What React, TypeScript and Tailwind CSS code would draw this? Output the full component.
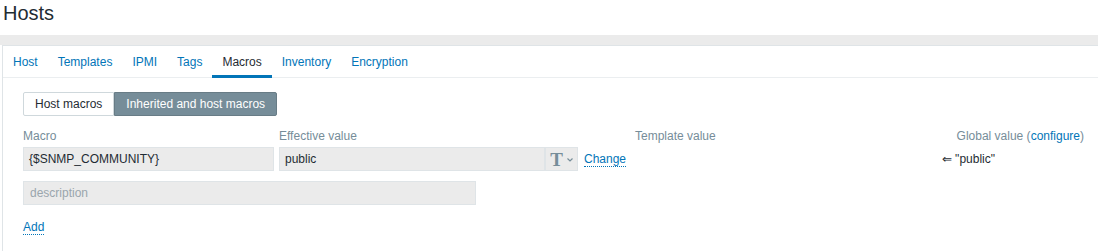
import React from "react";

const tabs = ["Host", "Templates", "IPMI", "Tags", "Macros", "Inventory", "Encryption"];

function TypeIcon() {
  return (
    <div className="flex h-[24px] w-[33px] items-center justify-center gap-[4px] border border-[#dfe4e7] bg-[#ebebeb]">
      <span className="text-[19px] leading-none font-bold text-[#768d99] [font-family:'Liberation_Serif',serif]">T</span>
      <svg width="6" height="4" viewBox="0 0 6 4" className="mt-[2px]">
        <path d="M0.5 0.5 L3 3 L5.5 0.5" fill="none" stroke="#768d99" strokeWidth="1.2" />
      </svg>
    </div>
  );
}

export default function App() {
  return (
    <div className="h-[251px] w-[1098px] overflow-hidden bg-white text-[12px] text-[#1f2c33] [font-family:'Liberation_Sans',Arial,sans-serif]">
      {/* Header */}
      <h1 className="h-[35px] pl-[3px] pt-[1px] text-[20px] leading-[24px] font-normal text-[#1f2c33]">Hosts</h1>
      <div className="h-[10px] bg-[#ebebeb]" />

      {/* Panel */}
      <div className="ml-[2px] h-[206px] border-l border-t border-[#dfe4e7] bg-white">
        {/* Tabs */}
        <div className="flex h-[32px] border-b border-[#ebeef0]">
          {tabs.map((tab) => (
            <div
              key={tab}
              className={`flex h-[32px] items-center px-[10px] ${
                tab === "Macros" ? "border-b-[3px] border-[#0275b8] pt-[3px] text-[#1f2c33]" : "text-[#0275b8]"
              }`}
            >
              {tab}
            </div>
          ))}
        </div>

        <div className="pl-[20px] pt-[14px]">
          {/* Toggle */}
          <div className="flex h-[24px]">
            <div className="flex items-center rounded-l-[2px] border border-[#cfd8dc] bg-white px-[11px] text-[#1f2c33]">Host macros</div>
            <div className="flex items-center rounded-r-[2px] border border-[#687c86] bg-[#768d99] px-[11px] text-white">
              Inherited and host macros
            </div>
          </div>

          {/* Labels */}
          <div className="mt-[11px] grid h-[16px] grid-cols-[256px_356px_1fr] items-center text-[#768d99]">
            <span>Macro</span>
            <span>Effective value</span>
            <div className="flex justify-between pr-[14px]">
              <span>Template value</span>
              <span>
                Global value (<span className="text-[#0275b8]">configure</span>)
              </span>
            </div>
          </div>

          {/* Values */}
          <div className="mt-[4px] grid h-[24px] grid-cols-[256px_356px_1fr] items-center">
            <div className="flex h-[24px] w-[251px] items-center border border-[#dfe4e7] bg-[#ebebeb] px-[5px]">{"{$SNMP_COMMUNITY}"}</div>
            <div className="flex items-center">
              <div className="flex h-[24px] w-[266px] items-center border border-[#dfe4e7] bg-[#ebebeb] px-[5px]">public</div>
              <TypeIcon />
              <span className="ml-[6px] border-b border-dotted border-[#0275b8] leading-[14px] text-[#0275b8]">Change</span>
            </div>
            <div className="flex justify-end pr-[103px]">
              <span>⇐ "public"</span>
            </div>
          </div>

          {/* Description */}
          <div className="mt-[10px] flex h-[24px] w-[453px] items-center border border-[#dfe4e7] bg-[#ebebeb] px-[6px] text-[#9aa6ad]">
            description
          </div>

          {/* Add */}
          <div className="mt-[13px]">
            <span className="border-b border-dotted border-[#0275b8] leading-[14px] text-[#0275b8]">Add</span>
          </div>
        </div>
      </div>
    </div>
  );
}
